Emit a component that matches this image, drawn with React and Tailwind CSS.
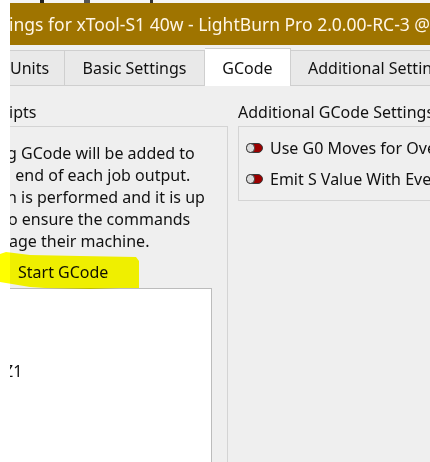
import React from "react";

const font = { fontFamily: '"Noto Sans", "Open Sans", "Liberation Sans", sans-serif' };

function Toggle() {
  return (
    <svg width="17" height="10" viewBox="0 0 17 10" className="shrink-0">
      <rect x="0.5" y="0.5" width="16" height="9" rx="4.5" fill="#9b0000" stroke="#3a3a3a" />
      <rect x="0.5" y="0.5" width="8" height="9" rx="4" fill="#dcdcdc" stroke="#3a3a3a" />
    </svg>
  );
}

export default function App() {
  return (
    <div
      className="relative w-[430px] h-[462px] bg-white overflow-hidden flex text-[16px] text-[#111]"
      style={font}
    >
      <div className="w-[10px] shrink-0 bg-white" />
      <div className="flex-1 min-w-0 flex flex-col overflow-hidden">
        {/* top strip */}
        <div className="h-[3px] shrink-0 flex bg-[#f4f4f4]">
          <div className="w-[30px]" />
          <div className="w-[4px] bg-[#222]" />
          <div className="w-[40px]" />
          <div className="w-[6px] bg-[#555]" />
          <div className="w-[60px]" />
          <div className="w-[3px] bg-[#333]" />
        </div>
        {/* title bar */}
        <div className="h-[42px] shrink-0 bg-[#9f7400] flex items-center whitespace-nowrap overflow-hidden">
          <span className="text-[#fff6e6] text-[17.5px] -ml-[1px]">
            ings for xTool-S1 40w - LightBurn Pro 2.0.00-RC-3 @ localhost
          </span>
        </div>
        {/* tab bar */}
        <div className="h-[41px] shrink-0 bg-[#f0f0f0] flex items-end whitespace-nowrap">
          <div className="h-[36px] w-[55px] shrink-0 bg-[#e9e9e9] border-r border-b border-t border-[#cfcfcf] flex items-center">
            <span>Units</span>
          </div>
          <div className="h-[36px] w-[140px] shrink-0 bg-[#e9e9e9] border-r border-b border-t border-[#cfcfcf] flex items-center justify-center">
            <span>Basic Settings</span>
          </div>
          <div className="h-[38px] w-[86px] shrink-0 bg-white border-r border-t border-[#cfcfcf] flex items-center justify-center">
            <span>GCode</span>
          </div>
          <div className="h-[36px] flex-1 bg-[#e9e9e9] border-b border-t border-[#cfcfcf] flex items-center pl-[17px] overflow-hidden">
            <span>Additional Settings</span>
          </div>
        </div>
        {/* content */}
        <div className="flex-1 bg-[#efefef] flex gap-[10px] overflow-hidden">
          {/* left column */}
          <div className="w-[218px] shrink-0 flex flex-col">
            <div className="h-[40px] flex items-center pt-[12px] -ml-[1px]">ipts</div>
            <div className="flex-1 border-t border-r border-[#d4d4d4] flex flex-col pt-[15px] pr-[15px] leading-[22px] whitespace-nowrap">
              <div className="-ml-[3px]">g GCode will be added to</div>
              <div className="-ml-[3px]">l end of each job output.</div>
              <div className="-ml-[3px]">n is performed and it is up</div>
              <div className="-ml-[2px]">o ensure the commands</div>
              <div className="-ml-[1px]">age their machine.</div>
              <div className="mt-[9px] pl-[8px]">Start GCode</div>
              <div className="mt-[5px] flex-1 bg-white border-t border-r border-[#bcbcbc] pt-[71px]">
                <div className="-ml-[6px]">Z1</div>
              </div>
            </div>
          </div>
          {/* right column */}
          <div className="flex-1 min-w-0 flex flex-col whitespace-nowrap">
            <div className="h-[40px] flex items-center pt-[12px]">Additional GCode Settings</div>
            <div className="h-[75px] border-t border-l border-b border-[#d4d4d4] flex flex-col justify-center gap-[9px] pl-[7px] overflow-hidden">
              <div className="flex items-center gap-[7px] h-[22px]">
                <Toggle />
                <span>Use G0 Moves for Overscanning</span>
              </div>
              <div className="flex items-center gap-[7px] h-[22px]">
                <Toggle />
                <span>Emit S Value With Every G1</span>
              </div>
            </div>
          </div>
        </div>
      </div>
      {/* yellow highlighter mark */}
      <svg
        className="absolute left-0 top-[250px] mix-blend-multiply pointer-events-none"
        width="145"
        height="42"
        viewBox="0 0 145 42"
      >
        <path
          d="M0 4 L6 2 L30 5 L80 6 L136 7 L139 11 L139 38 L120 38 L90 39 L45 38 L30 37 L18 35 L6 33 L0 32 Z"
          fill="#ffff00"
        />
      </svg>
    </div>
  );
}
